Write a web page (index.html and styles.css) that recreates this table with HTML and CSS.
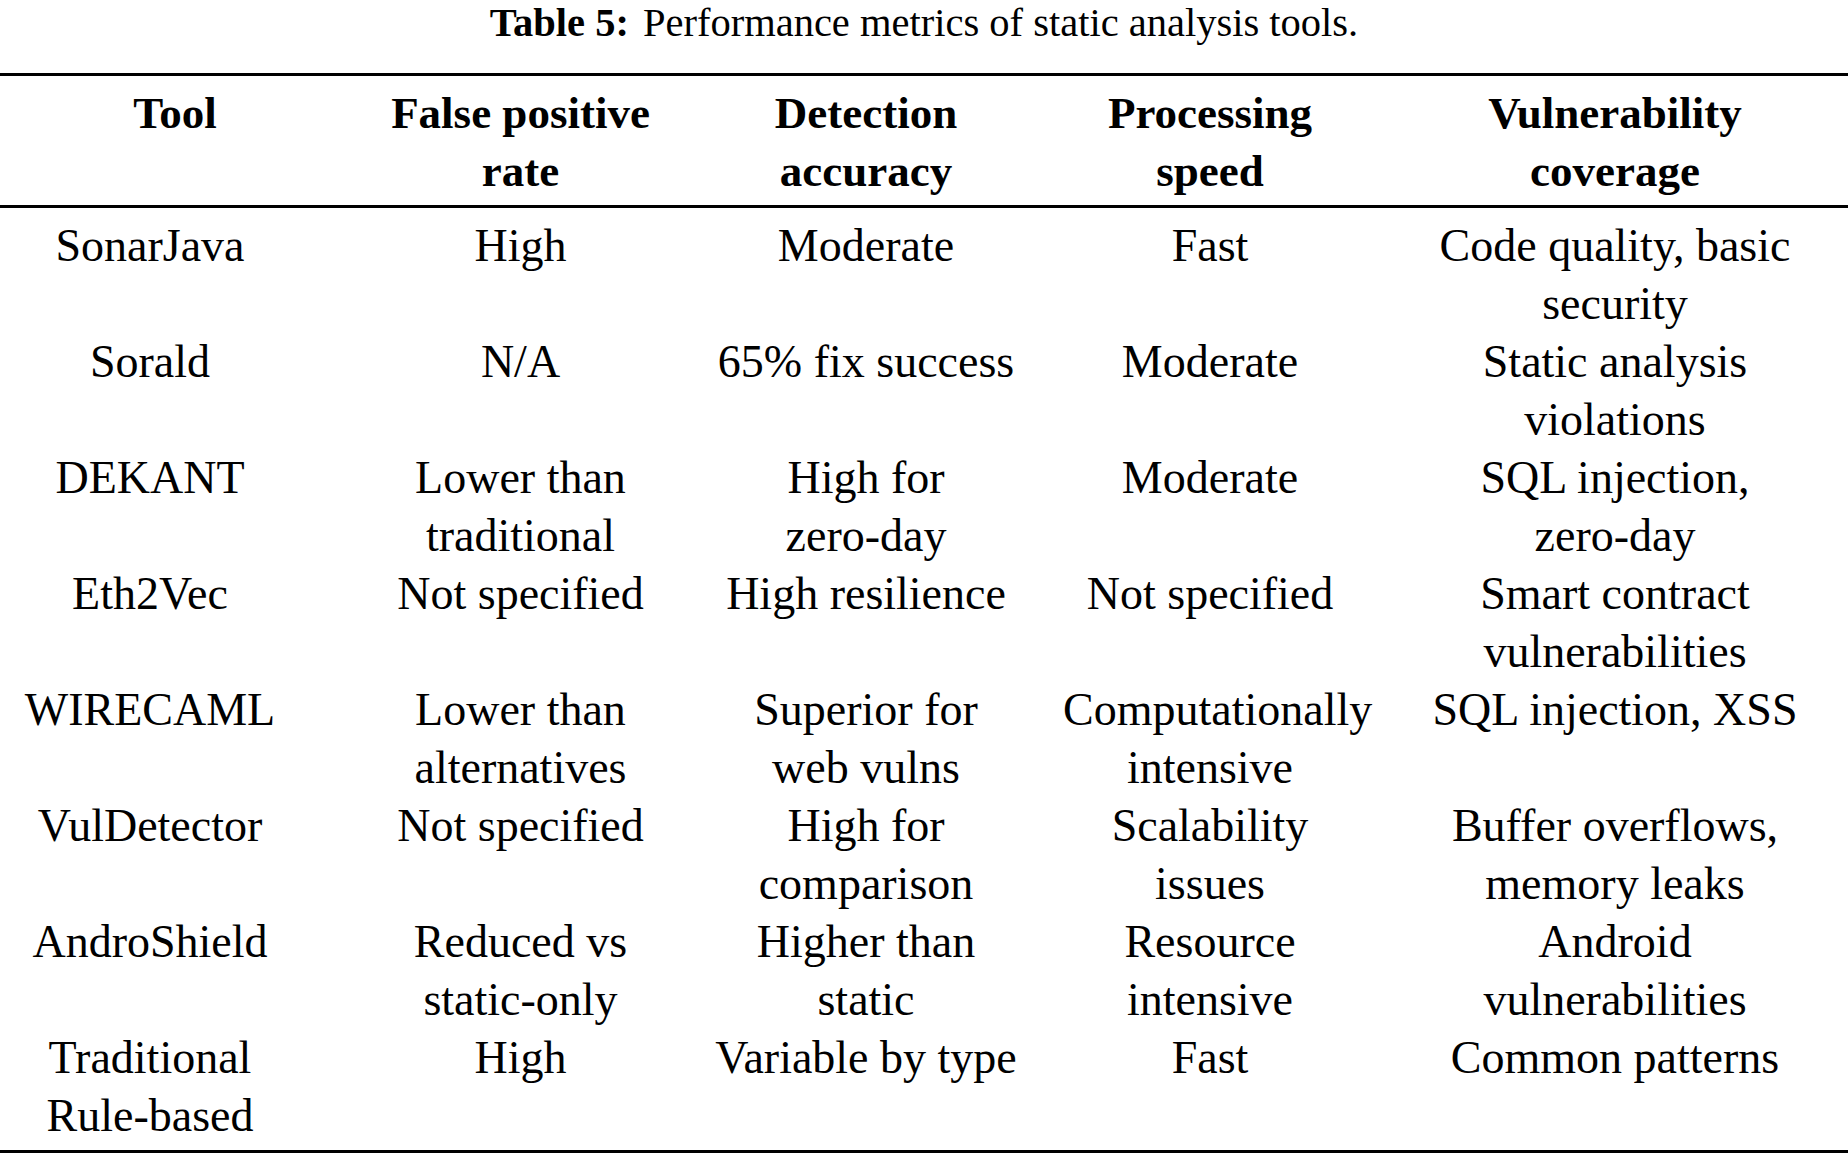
FILE: index.html
```html
<!DOCTYPE html>
<html lang="en">
<head>
<meta charset="utf-8">
<title>Table 5: Performance metrics of static analysis tools.</title>
<link rel="stylesheet" href="styles.css">
</head>
<body>
<div class="page">
  <p class="caption"><b class="label">Table 5:</b>Performance metrics of static analysis tools.</p>
  <div class="table">
    <div class="grid head">
      <div class="cell c1 tool"><span class="t">Tool</span></div>
      <div class="cell c2"><span class="t">False positive<br>rate</span></div>
      <div class="cell c3"><span class="t">Detection<br>accuracy</span></div>
      <div class="cell c4"><span class="t">Processing<br>speed</span></div>
      <div class="cell c5"><span class="t">Vulnerability<br>coverage</span></div>
    </div>
    <div class="grid body">
      <div class="cell c1"><span class="t">SonarJava</span></div>
      <div class="cell c2"><span class="t">High</span></div>
      <div class="cell c3"><span class="t">Moderate</span></div>
      <div class="cell c4"><span class="t">Fast</span></div>
      <div class="cell c5"><span class="t">Code quality, basic<br>security</span></div>

      <div class="cell c1"><span class="t">Sorald</span></div>
      <div class="cell c2"><span class="t">N/A</span></div>
      <div class="cell c3"><span class="t">65% fix success</span></div>
      <div class="cell c4"><span class="t">Moderate</span></div>
      <div class="cell c5"><span class="t">Static analysis<br>violations</span></div>

      <div class="cell c1"><span class="t">DEKANT</span></div>
      <div class="cell c2"><span class="t">Lower than<br>traditional</span></div>
      <div class="cell c3"><span class="t">High for<br>zero-day</span></div>
      <div class="cell c4"><span class="t">Moderate</span></div>
      <div class="cell c5"><span class="t">SQL injection,<br>zero-day</span></div>

      <div class="cell c1"><span class="t">Eth2Vec</span></div>
      <div class="cell c2"><span class="t">Not specified</span></div>
      <div class="cell c3"><span class="t">High resilience</span></div>
      <div class="cell c4"><span class="t">Not specified</span></div>
      <div class="cell c5"><span class="t">Smart contract<br>vulnerabilities</span></div>

      <div class="cell c1"><span class="t">WIRECAML</span></div>
      <div class="cell c2"><span class="t">Lower than<br>alternatives</span></div>
      <div class="cell c3"><span class="t">Superior for<br>web vulns</span></div>
      <div class="cell c4"><span class="t">Computationally<br>intensive</span></div>
      <div class="cell c5"><span class="t">SQL injection, XSS</span></div>

      <div class="cell c1"><span class="t">VulDetector</span></div>
      <div class="cell c2"><span class="t">Not specified</span></div>
      <div class="cell c3"><span class="t">High for<br>comparison</span></div>
      <div class="cell c4"><span class="t">Scalability<br>issues</span></div>
      <div class="cell c5"><span class="t">Buffer overflows,<br>memory leaks</span></div>

      <div class="cell c1"><span class="t">AndroShield</span></div>
      <div class="cell c2"><span class="t">Reduced vs<br>static-only</span></div>
      <div class="cell c3"><span class="t">Higher than<br>static</span></div>
      <div class="cell c4"><span class="t">Resource<br>intensive</span></div>
      <div class="cell c5"><span class="t">Android<br>vulnerabilities</span></div>

      <div class="cell c1"><span class="t">Traditional<br>Rule-based</span></div>
      <div class="cell c2"><span class="t">High</span></div>
      <div class="cell c3"><span class="t">Variable by type</span></div>
      <div class="cell c4"><span class="t">Fast</span></div>
      <div class="cell c5"><span class="t">Common patterns</span></div>
    </div>
  </div>
</div>
</body>
</html>
```
FILE: styles.css
```css
html, body {
  margin: 0;
  padding: 0;
  background: #ffffff;
}

body {
  font-family: "Liberation Serif", "Times New Roman", serif;
  color: #000000;
}

.page {
  width: 1848px;
}

.caption {
  margin: 0 0 28px 0;
  font-size: 40.5px;
  line-height: 45px;
  text-align: center;
  white-space: nowrap;
}

.caption .label {
  font-weight: bold;
  margin-right: 14px;
}

.table {
  border-top: 3px solid #000;
  border-bottom: 3px solid #000;
}

.grid {
  display: grid;
  grid-template-columns: 300px 441px 250px 438px 372px;
}

.head {
  font-size: 45px;
  font-weight: bold;
  line-height: 58px;
  padding: 8px 0 5px 0;
  border-bottom: 3px solid #000;
}

.body {
  font-size: 46px;
  line-height: 58px;
  grid-auto-rows: 116px;
  padding: 9px 0 5px 0;
}

.cell {
  display: flex;
  justify-content: center;
  align-items: flex-start;
  min-width: 0;
}

.t {
  flex: 0 0 auto;
  text-align: center;
  white-space: nowrap;
}

.c4 .t {
  width: 294px;
  min-width: 0;
}

.head .tool {
  padding-left: 50px;
}
```
